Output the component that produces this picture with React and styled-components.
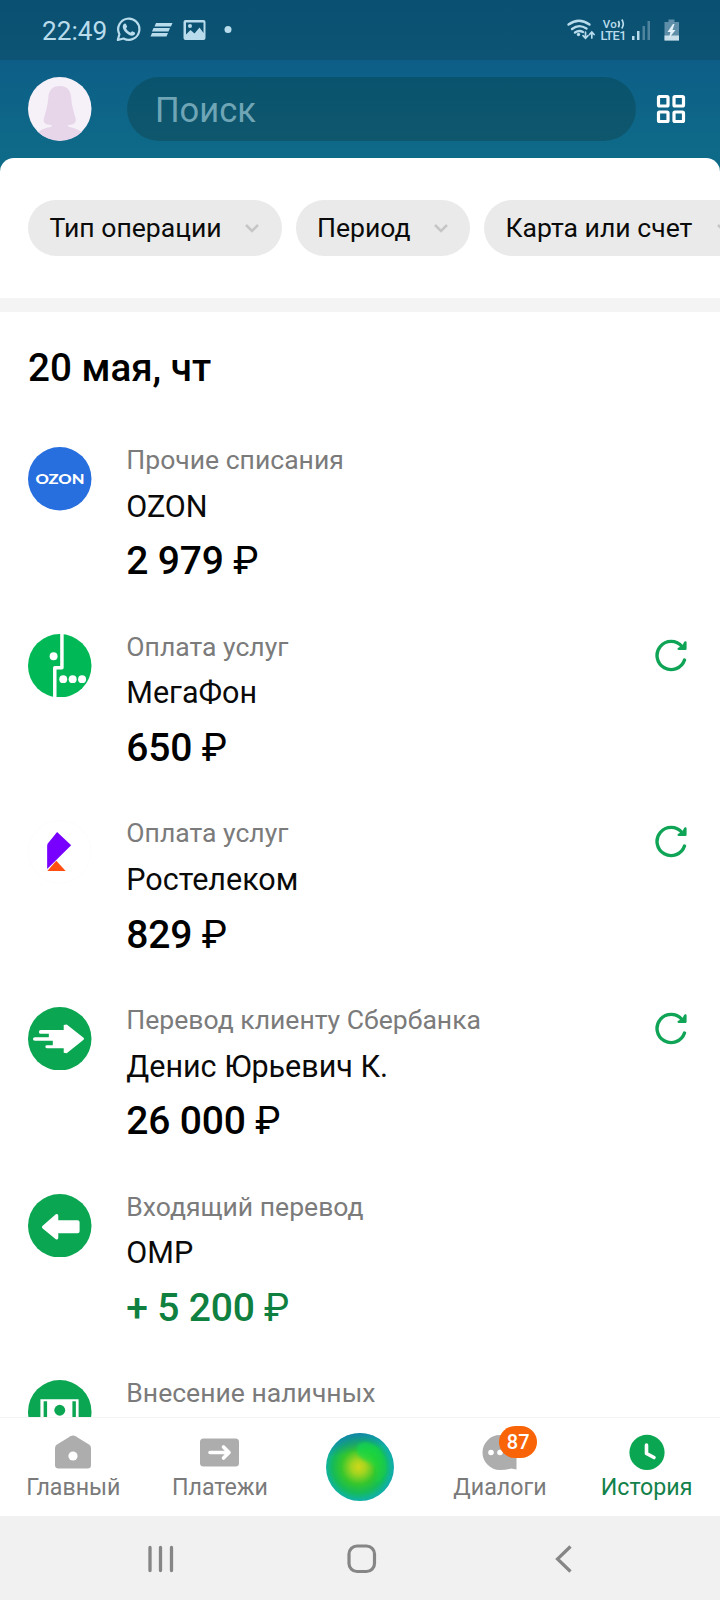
import React from 'react';
import styled, { createGlobalStyle } from 'styled-components';

const GlobalStyle = createGlobalStyle`
  * { box-sizing: border-box; }
  body { margin: 0; background: #fff; font-family: Roboto, "Noto Sans", sans-serif; }
  svg { display: block; flex: none; }
`;

const Screen = styled.div`
  width: 720px;
  height: 1600px;
  overflow: hidden;
  display: flex;
  flex-direction: column;
  background: linear-gradient(#0b5078 0, #0d5e87 60px, #0e6b88 160px);
`;

const StatusBar = styled.div`
  height: 60px;
  flex: none;
  display: flex;
  align-items: center;
  padding: 0 40px 0 42px;
  background: linear-gradient(#0a5072, #0d5373);
  color: #b9dcec;
`;

const Clock = styled.span`
  width: 74px;
  font-size: 26.2px;
  line-height: 30px;
  padding-top: 2px;
`;

const StatusSpacer = styled.div`
  flex: 1;
`;

const Header = styled.div`
  height: 98px;
  flex: none;
  display: flex;
  align-items: center;
  padding: 0 34px 0 28px;
`;

const SearchField = styled.div`
  width: 510px;
  height: 64px;
  margin: 0 20px 0 35.5px;
  padding: 2px 28px 0;
  display: flex;
  align-items: center;
  border-radius: 32px;
  background: linear-gradient(#0a536e, #0e576d);
  color: #70a5b6;
  font-size: 34.5px;
`;

const Sheet = styled.main`
  height: 1259px;
  flex: none;
  overflow: hidden;
  border-radius: 14px 14px 0 0;
  background: #fff;
`;

const Filters = styled.div`
  height: 140px;
  display: flex;
  gap: 14px;
  padding: 42px 0 0 28px;
`;

const Chip = styled.div`
  width: ${(p) => p.$width}px;
  height: 56px;
  flex: none;
  display: flex;
  align-items: center;
  justify-content: space-between;
  padding: 0 21.5px;
  border-radius: 28px;
  background: #eaeaea;
  color: #0b0b0b;
  font-size: 26.6px;
  line-height: 30px;
  white-space: nowrap;
`;

const ChipLabel = styled.span`
  padding-bottom: 1px;
`;

const Divider = styled.div`
  height: 13.5px;
  background: #f4f4f4;
`;

const DayTitle = styled.h2`
  margin: 33px 0 56.5px 28px;
  font-size: 38.6px;
  line-height: 46px;
  font-weight: 500;
  color: #000;
`;

const Operation = styled.article`
  height: 186.67px;
  display: flex;
  padding: 0 32px 0 28px;
`;

const Details = styled.div`
  flex: 1;
  margin-left: 34.8px;
`;

const Category = styled.div`
  font-size: 26.55px;
  line-height: 26px;
  color: #7b7b7b;
`;

const Name = styled.div`
  margin: 15.8px 0 13.6px;
  font-size: 30.5px;
  line-height: 36px;
  color: #0a0a0a;
`;

const Amount = styled.div`
  font-size: 39px;
  line-height: 46px;
  font-weight: 500;
  letter-spacing: -0.2px;
  color: ${(p) => (p.$income ? '#0f8040' : '#000')};
`;

const Currency = styled.span`
  font-size: 38px;
  font-weight: 400;
`;

const Repeat = styled.div`
  padding-top: 4px;
`;

const TabBar = styled.nav`
  height: 99px;
  flex: none;
  display: flex;
  background: #fff;
  border-top: 1px solid #f4f4f4;
`;

const Tab = styled.div`
  width: 146.67px;
  display: flex;
  flex-direction: column;
  align-items: center;
  color: ${(p) => (p.$active ? '#12814a' : '#7a7a7a')};
  font-size: 23.2px;
`;

const TabIcon = styled.div`
  position: relative;
  height: 55px;
  padding-top: 15px;
`;

const TabLabel = styled.span`
  line-height: 28px;
`;

const OrbSlot = styled.div`
  width: 133.3px;
  display: flex;
  justify-content: center;
  padding-top: 15px;
`;

const Badge = styled.span`
  position: absolute;
  left: 17px;
  top: 7.5px;
  width: 38.5px;
  height: 32px;
  border-radius: 16px;
  background: #fa6408;
  color: #fff;
  font-size: 20px;
  font-weight: 500;
  line-height: 33px;
  text-align: center;
`;

const SystemBar = styled.div`
  height: 84px;
  flex: none;
  display: flex;
  align-items: center;
  justify-content: space-between;
  padding: 1px 147px 0;
  background: #f1f1f1;
`;

const HomeButton = styled.div`
  margin-right: 6px;
`;

const StatusIcons = () => (
  <svg width="160" height="40" viewBox="0 0 160 40" fill="none">
    <g stroke="#b9dcec" strokeWidth="2.2">
      <path d="M1.8 30 L3.4 24.2 A10.6 10.6 0 1 1 7.6 28.5 Z" strokeLinejoin="round" />
    </g>
    <path d="M7.4 14.6 c1-1.5 2.4-1.2 2.8-.2 l.9 2.2 c.2.6-.9 1.5-1 2 c.8 1.7 2.6 3.3 4.3 4 c.6-.2 1.3-1.7 1.9-1.4 l2.5 1.2 c.6.5.2 2-.7 2.7 c-2 1.4-5.4.2-7.7-2 c-3-2.7-4.5-6-3-8.500z" fill="#b9dcec" />
    <g fill="#b9dcec">
      <path d="M40 13h16.500l-1.500 3.500H38.500zM37.500 18h16.500l-1.500 3.500H36zM36 23h16l-1.500 3.500H34.500z" />
      <path fillRule="evenodd" d="M69.500 10h18a2 2 0 0 1 2 2v16a2 2 0 0 1-2 2h-18a2 2 0 0 1-2-2V12a2 2 0 0 1 2-2zM70 12.500v12l4.500-4.500 4 3.500 5-6 4 5.500v-10.500z" />
      <circle cx="74" cy="16" r="2" />
      <circle cx="112" cy="19.500" r="3.500" />
    </g>
  </svg>
);

const NetworkIcons = () => (
  <svg width="114" height="40" viewBox="566 10 114 40" fill="none">
    <g stroke="#b9dcec" strokeLinecap="round" strokeWidth="2.400">
      <path d="M568.500 24.500q10.500-7.500 21 0M572 29q7-5.500 14.500-.5M575 32.500q4-2.600 8-.5" />
      <path d="M585.500 32v6m-2.500-2.300 2.500 2.600 2.500-2.600M591.800 38v-5.500m-2.300 2 2.300-2.500 2.300 2.500" strokeWidth="1.700" />
    </g>
    <circle cx="578.500" cy="34.500" r="1.700" fill="#b9dcec" />
    <g fill="#b9dcec" fontFamily="Roboto, sans-serif" fontWeight="500">
      <text x="602.800" y="28" fontSize="11.500" textLength="14">Vo</text>
      <text x="600.500" y="40.200" fontSize="12.800" textLength="26">LTE1</text>
    </g>
    <path d="M618.300 21q2 3.200 0 6.400M621.800 19.500q3 4.500 0 9" stroke="#b9dcec" strokeWidth="1.700" />
    <path d="M632 36h2.500v4H632zM637 31h2.500v9H637z" fill="#b9dcec" />
    <path d="M642.500 26h2.500v14h-2.500zM647.500 21h2.500v19h-2.500z" fill="#4e849e" />
    <path d="M668.500 19.500h6V22h4.500v18.500h-14.500V22h4z" fill="#5f8fa8" />
    <path d="M664.500 35.500H679v5h-14.500z" fill="#c9dfe9" />
    <path d="M673 24l-5.500 8h3l-1.500 6 6.500-8h-3l2-6z" fill="#e3f2f8" />
  </svg>
);

const Avatar = () => (
  <svg width="63.5" height="63.5" viewBox="0 0 64 64">
    <circle cx="32" cy="32" r="32" fill="#f6f0f8" />
    <path d="M32 9c7.500 0 10.800 4 11.500 12 .5 8 2.500 13.500 4.500 21 .9 4-1.500 6-8.500 6.500l2 2c5 .8 9.500 2.800 12.800 5A32 32 0 0 1 10 55.500c3-2.200 7.500-4.200 13-5l1.500-2c-7-.5-9.500-2.500-8.500-6.500 2-7.500 4-13 4.500-21C21 13 24.500 9 32 9z" fill="#e7d6ea" />
  </svg>
);

const GridIcon = () => (
  <svg width="30" height="30" viewBox="0 0 30 30" fill="none" stroke="#fff" strokeWidth="3.2">
    <rect x="2.500" y="2.500" width="9.500" height="9.500" rx="1" />
    <rect x="18" y="2.500" width="9.500" height="9.500" rx="1" />
    <rect x="2.500" y="18" width="9.500" height="9.500" rx="1" />
    <rect x="18" y="18" width="9.500" height="9.500" rx="1" />
  </svg>
);

const ChevronIcon = () => (
  <svg width="16" height="16" viewBox="0 0 16 16" fill="none" stroke="#c6c6c6" strokeWidth="2.500">
    <path d="M2 5l6 6 6-6" />
  </svg>
);

const RepeatIcon = () => (
  <svg width="34" height="34" viewBox="0 0 34 34" fill="none" stroke="#10a457" strokeWidth="3.400" strokeLinecap="round" strokeLinejoin="round">
    <path d="M30.500 22A14.100 14.100 0 1 1 28 8.500L29 10" />
    <path d="M31.300 4.500V10.800H24.800L29 8.800z" fill="#10a457" strokeWidth="2.600" />
  </svg>
);

const logos = {
  ozon: (
    <>
      <circle cx="32" cy="32" r="32" fill="#276fdf" />
      <text x="7.500" y="37" fontFamily="Lato, sans-serif" fontWeight="900" fontSize="14" textLength="49.500" lengthAdjust="spacingAndGlyphs" fill="#fff">OZON</text>
    </>
  ),
  megafon: (
    <>
      <circle cx="32" cy="32" r="32" fill="#00b956" />
      <path d="M34.200-1V34H27V65" stroke="#fff" strokeWidth="3.500" fill="none" strokeLinejoin="round" />
      <g fill="#fff">
        <circle cx="25.800" cy="22.500" r="4" />
        <circle cx="35.500" cy="45.500" r="4" />
        <circle cx="45" cy="45.500" r="4" />
        <circle cx="54.500" cy="45.500" r="4" />
      </g>
    </>
  ),
  rostelecom: (
    <>
      <circle cx="32" cy="32" r="31.500" fill="#fff" stroke="#fcfcfc" />
      <path d="M19.500 51.500h18.500L28.500 41z" fill="#ff4f12" />
      <path d="M21 22.500L29.300 12 43.500 25.500 19.300 49.500V26q0-2 1.700-3.500z" fill="#7700ff" />
    </>
  ),
  transfer: (
    <>
      <circle cx="32" cy="32" r="32" fill="#0ba652" />
      <path d="M13 23.200h23v-5l3-.5 17 13.300q1 1 0 2L39 46.500l-3-.500V41.500H19q-1.500 0-1.500-1.500T19 38.500h6V34H7q-2 0-2-1.700T7 30.500h14V27h-8q-2 0-2-1.900t2-1.900z" fill="#fff" />
    </>
  ),
  incoming: (
    <>
      <circle cx="32" cy="32" r="32" fill="#0ba652" />
      <path d="M14.500 32.200L28 20.500q2.500-1 2.500 1.500v4.500H50q2 0 2 2V37.500q0 2-2 2H30.500V44q0 2.500-2.500 1.500L14.500 34.500q-1-1.200 0-2.300z" fill="#fff" />
    </>
  ),
  cash: (
    <>
      <circle cx="32" cy="32" r="32" fill="#0ba652" />
      <path d="M12.500 19.500H51V45H12.500z" fill="#fff" />
      <path d="M17.500 21.500v22M46.500 21.500v22" stroke="#0ba652" strokeWidth="3.500" />
      <circle cx="32" cy="30.500" r="5.500" fill="#0ba652" />
    </>
  ),
};

const Logo = ({ kind }) => (
  <svg width="63.5" height="63.5" viewBox="0 0 64 64">{logos[kind]}</svg>
);

const HomeIcon = () => (
  <svg width="36" height="38" viewBox="0 0 36 38">
    <path d="M15.500 3.200q2.500-1.300 5 0L34 11.500q2 1.300 2 3.500V32q0 3.500-3.500 3.500H3.500Q0 35.500 0 32V15q0-2.200 2-3.500z" fill="#adadad" />
    <circle cx="18" cy="23" r="4.600" fill="#fff" />
  </svg>
);

const PaymentsIcon = () => (
  <svg width="39" height="38" viewBox="0 0 39 38">
    <rect y="5.500" width="39" height="28" rx="3.500" fill="#adadad" />
    <path d="M10 19.500h18M23.500 14l5.500 5.500-5.500 5.500" fill="none" stroke="#fff" strokeWidth="3.600" strokeLinecap="round" strokeLinejoin="round" />
  </svg>
);

const DialogsIcon = () => (
  <svg width="36" height="38" viewBox="0 0 36 38">
    <path d="M18 2a17.500 17.500 0 0 1 16.500 17.500V36.500L29 35.500Q24 37 18 37A17.500 17.500 0 0 1 18 2z" fill="#adadad" />
    <circle cx="9" cy="19.500" r="2.800" fill="#fff" />
    <circle cx="18" cy="19.500" r="2.800" fill="#fff" />
  </svg>
);

const HistoryIcon = () => (
  <svg width="36" height="38" viewBox="0 0 36 38">
    <circle cx="18" cy="19.400" r="17.600" fill="#0ba652" />
    <path d="M17.500 12v8.500l7.500 4" fill="none" stroke="#fff" strokeWidth="3.600" strokeLinecap="round" strokeLinejoin="round" />
  </svg>
);

const OrbIcon = () => (
  <svg width="68" height="68" viewBox="0 0 68 68">
    <defs>
      <radialGradient id="orbCore" cx=".48" cy=".5" r=".53">
        <stop offset="0" stopColor="#d0d81a" />
        <stop offset=".2" stopColor="#a2d420" />
        <stop offset=".48" stopColor="#35c62d" />
        <stop offset=".72" stopColor="#16bb58" />
        <stop offset=".9" stopColor="#10b39c" />
        <stop offset="1" stopColor="#12a6ae" />
      </radialGradient>
      <linearGradient id="orbShade" x1=".3" y1="0" x2=".5" y2="1">
        <stop offset="0" stopColor="#1379a5" stopOpacity=".85" />
        <stop offset=".3" stopColor="#1379a5" stopOpacity="0" />
      </linearGradient>
      <linearGradient id="orbSwirl" x1="0" y1="0" x2=".6" y2="1">
        <stop offset="0" stopColor="#12d455" stopOpacity=".8" />
        <stop offset=".5" stopColor="#12dc40" stopOpacity=".6" />
        <stop offset="1" stopColor="#12dc40" stopOpacity=".3" />
      </linearGradient>
      <filter id="orbSoft" x="-20%" y="-20%" width="140%" height="140%">
        <feGaussianBlur stdDeviation="1.8" />
      </filter>
    </defs>
    <circle cx="34" cy="34" r="34" fill="url(#orbCore)" />
    <circle cx="34" cy="34" r="34" fill="url(#orbShade)" />
    <path d="M31 18C30 10 38 7 46 11C55 15 61 25 61 36C61 46 54 52 49 50C51 40 50 33 44 30C37 27 32 24 31 18z" fill="url(#orbSwirl)" filter="url(#orbSoft)" />
  </svg>
);

const RecentsIcon = () => (
  <svg width="28" height="28" viewBox="0 0 28 28" stroke="#868686" strokeWidth="3.300" strokeLinecap="round">
    <path d="M3 2.500v23M13.500 2.500v23M24.500 2.500v23" />
  </svg>
);

const HomeButtonIcon = () => (
  <svg width="30" height="30" viewBox="0 0 30 30">
    <rect x="2" y="2" width="25.500" height="25.500" rx="8" fill="none" stroke="#868686" strokeWidth="3.2" />
  </svg>
);

const BackIcon = () => (
  <svg width="18" height="28" viewBox="0 0 18 28" fill="none" stroke="#868686" strokeWidth="3.2">
    <path d="M15.500 1.500L2.500 14l13 12.500" />
  </svg>
);

const filters = [
  { label: 'Тип операции', width: 253.5 },
  { label: 'Период', width: 174.5 },
  { label: 'Карта или счет', width: 269 },
];

const operations = [
  { logo: 'ozon', category: 'Прочие списания', name: 'OZON', amount: '2 979' },
  { logo: 'megafon', category: 'Оплата услуг', name: 'МегаФон', amount: '650', repeat: true },
  { logo: 'rostelecom', category: 'Оплата услуг', name: 'Ростелеком', amount: '829', repeat: true },
  { logo: 'transfer', category: 'Перевод клиенту Сбербанка', name: 'Денис Юрьевич К.', amount: '26 000', repeat: true },
  { logo: 'incoming', category: 'Входящий перевод', name: 'ОМР', amount: '+ 5 200', income: true },
  { logo: 'cash', category: 'Внесение наличных' },
];

export default function App() {
  return (
    <Screen>
      <GlobalStyle />
      <StatusBar>
        <Clock>22:49</Clock>
        <StatusIcons />
        <StatusSpacer />
        <NetworkIcons />
      </StatusBar>
      <Header>
        <Avatar />
        <SearchField>Поиск</SearchField>
        <GridIcon />
      </Header>
      <Sheet>
        <Filters>
          {filters.map((f) => (
            <Chip key={f.label} $width={f.width}>
              <ChipLabel>{f.label}</ChipLabel>
              <ChevronIcon />
            </Chip>
          ))}
        </Filters>
        <Divider />
        <DayTitle>20 мая, чт</DayTitle>
        {operations.map((o) => (
          <Operation key={o.logo}>
            <Logo kind={o.logo} />
            <Details>
              <Category>{o.category}</Category>
              {o.name && <Name>{o.name}</Name>}
              {o.amount && (
                <Amount $income={o.income}>
                  {o.amount} <Currency>₽</Currency>
                </Amount>
              )}
            </Details>
            {o.repeat && (
              <Repeat>
                <RepeatIcon />
              </Repeat>
            )}
          </Operation>
        ))}
      </Sheet>
      <TabBar>
        <Tab>
          <TabIcon><HomeIcon /></TabIcon>
          <TabLabel>Главный</TabLabel>
        </Tab>
        <Tab>
          <TabIcon><PaymentsIcon /></TabIcon>
          <TabLabel>Платежи</TabLabel>
        </Tab>
        <OrbSlot><OrbIcon /></OrbSlot>
        <Tab>
          <TabIcon>
            <DialogsIcon />
            <Badge>87</Badge>
          </TabIcon>
          <TabLabel>Диалоги</TabLabel>
        </Tab>
        <Tab $active>
          <TabIcon><HistoryIcon /></TabIcon>
          <TabLabel>История</TabLabel>
        </Tab>
      </TabBar>
      <SystemBar>
        <RecentsIcon />
        <HomeButton>
          <HomeButtonIcon />
        </HomeButton>
        <BackIcon />
      </SystemBar>
    </Screen>
  );
}
